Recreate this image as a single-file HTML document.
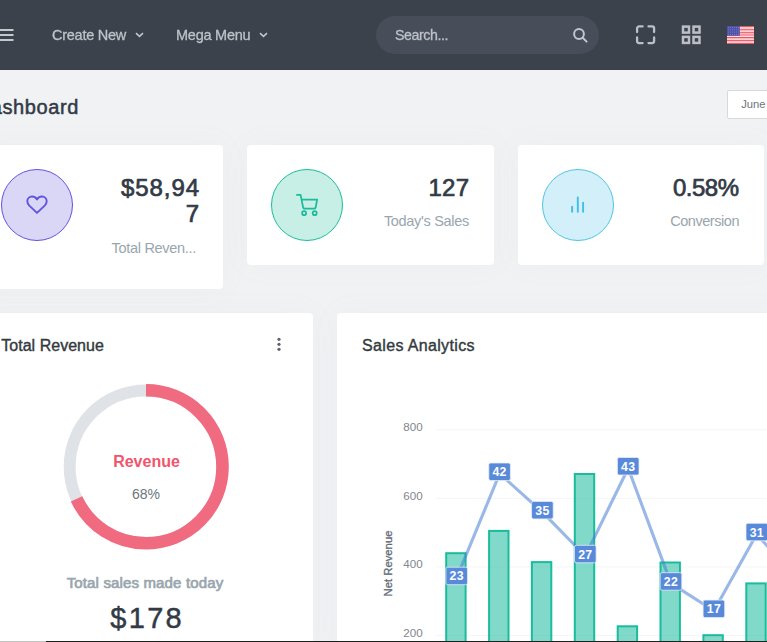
<!DOCTYPE html>
<html>
<head>
<meta charset="utf-8">
<title>Dashboard</title>
<style>
*{box-sizing:border-box;margin:0;padding:0}
html,body{width:767px;height:642px;overflow:hidden}
body{font-family:"Liberation Sans",sans-serif;background:#f1f2f4;position:relative;color:#323a46}
.abs{position:absolute}
#hdr{left:0;top:0;width:767px;height:70px;background:#3b424c}
.nav{will-change:transform;color:#bec2c9;-webkit-text-stroke:0.3px #bec2c9;font-size:14.5px;line-height:20px;white-space:nowrap;letter-spacing:-0.25px}
#search{left:376px;top:16px;width:223px;height:38px;border-radius:19px;background:#474e5a}
#search span{will-change:transform;position:absolute;left:19.4px;top:9px;font-size:14.2px;line-height:20px;color:#bdc1c8;-webkit-text-stroke:0.3px #bdc1c8;letter-spacing:-0.42px}
#title{font-size:20px;line-height:24px;font-weight:normal;-webkit-text-stroke:0.5px #323a46;color:#323a46;white-space:nowrap;letter-spacing:0.6px}
#june{left:727px;top:90px;width:60px;height:29px;background:#fff;border:1px solid #d6d9df;border-radius:2px;font-size:11.2px;line-height:26.6px;color:#6c757d;padding-left:13.2px}
.card{background:#fff;border-radius:4px;box-shadow:0 0 30px 0 rgba(154,161,171,.05)}
.circ{width:72px;height:72px;border-radius:50%;border:1px solid}
.big{font-size:24px;line-height:26px;font-weight:normal;-webkit-text-stroke:0.7px #323a46;color:#323a46;text-align:right;white-space:nowrap;letter-spacing:0.9px;margin-left:0.9px}
.sub{font-size:14.5px;line-height:20px;color:#98a6ad;text-align:right;white-space:nowrap;letter-spacing:-0.3px}
.h4{font-size:16px;line-height:20px;font-weight:normal;-webkit-text-stroke:0.4px #343a40;color:#343a40;white-space:nowrap;letter-spacing:0.1px}
</style>
</head>
<body>
<!-- header -->
<div id="hdr" class="abs"></div>
<svg class="abs" style="left:0;top:27px" width="16" height="16" viewBox="0 0 16 16"><g fill="#c5c8cd"><rect x="0" y="2" width="13.5" height="2"/><rect x="0" y="7" width="13.5" height="2"/><rect x="0" y="12" width="13.5" height="2"/></g></svg>
<div class="abs nav" style="left:52px;top:25px">Create New</div>
<svg class="abs" style="left:135px;top:31px" width="10" height="8" viewBox="0 0 10 8"><path d="M1 2.2 L4.5 5.4 L8 2.2" fill="none" stroke="#c0c3c9" stroke-width="1.6"/></svg>
<div class="abs nav" style="left:176px;top:25px">Mega Menu</div>
<svg class="abs" style="left:259px;top:31px" width="10" height="8" viewBox="0 0 10 8"><path d="M1 2.2 L4.5 5.4 L8 2.2" fill="none" stroke="#c0c3c9" stroke-width="1.6"/></svg>
<div id="search" class="abs"><span>Search...</span>
<svg class="abs" style="left:196px;top:11px" width="17" height="17" viewBox="0 0 17 17"><circle cx="7" cy="7" r="4.9" fill="none" stroke="#c2c5cb" stroke-width="2"/><line x1="10.7" y1="10.7" x2="14.6" y2="14.6" stroke="#c2c5cb" stroke-width="2" stroke-linecap="round"/></svg>
</div>
<!-- fullscreen icon -->
<svg class="abs" style="left:635px;top:24px" width="22" height="22" viewBox="0 0 22 22"><g fill="none" stroke="#bcbfc5" stroke-width="2.3" stroke-linecap="round" stroke-linejoin="round"><path d="M2.1 8 V4.4 a2 2 0 0 1 2 -2 H7.6"/><path d="M13.5 2.4 H17.1 a2 2 0 0 1 2 2 V8"/><path d="M19.1 13.5 V17.1 a2 2 0 0 1 -2 2 H13.5"/><path d="M7.6 19.1 H4.1 a2 2 0 0 1 -2 -2 V13.5"/></g></svg>
<!-- grid icon -->
<svg class="abs" style="left:681px;top:24px" width="22" height="22" viewBox="0 0 22 22"><g fill="none" stroke="#bcbfc5" stroke-width="2.5"><rect x="2" y="2.6" width="6" height="6"/><rect x="12.5" y="2.6" width="6" height="6"/><rect x="2" y="12.9" width="6" height="6"/><rect x="12.5" y="12.9" width="6" height="6"/></g></svg>
<!-- flag -->
<svg class="abs" style="left:727px;top:25.8px" width="27.1" height="18.2" viewBox="0 0 27.1 18.2"><rect width="27.1" height="18.2" fill="#f7cfd3"/><rect y="9.8" width="27.1" height="1.2" fill="#f9e4e6"/><rect y="0" width="27.1" height="1.0" fill="#f5525f"/><rect y="3.2" width="27.1" height="1.0" fill="#f5525f"/><rect y="6.2" width="27.1" height="1.0" fill="#f5525f"/><rect y="8.2" width="27.1" height="1.6" fill="#f28f97"/><rect y="11.0" width="27.1" height="1.2" fill="#f5525f"/><rect y="14.1" width="27.1" height="1.0" fill="#f5525f"/><rect y="17.0" width="27.1" height="1.2" fill="#f5525f"/><rect width="12.8" height="9.8" fill="#4c51a9"/><g fill="#fff" fill-opacity="0.33"><circle cx="1.4" cy="1.6" r="0.55"/><circle cx="3.4" cy="1.6" r="0.55"/><circle cx="5.4" cy="1.6" r="0.55"/><circle cx="7.4" cy="1.6" r="0.55"/><circle cx="9.4" cy="1.6" r="0.55"/><circle cx="11.4" cy="1.6" r="0.55"/><circle cx="1.4" cy="3.8" r="0.55"/><circle cx="3.4" cy="3.8" r="0.55"/><circle cx="5.4" cy="3.8" r="0.55"/><circle cx="7.4" cy="3.8" r="0.55"/><circle cx="9.4" cy="3.8" r="0.55"/><circle cx="11.4" cy="3.8" r="0.55"/><circle cx="1.4" cy="6.0" r="0.55"/><circle cx="3.4" cy="6.0" r="0.55"/><circle cx="5.4" cy="6.0" r="0.55"/><circle cx="7.4" cy="6.0" r="0.55"/><circle cx="9.4" cy="6.0" r="0.55"/><circle cx="11.4" cy="6.0" r="0.55"/><circle cx="1.4" cy="8.2" r="0.55"/><circle cx="3.4" cy="8.2" r="0.55"/><circle cx="5.4" cy="8.2" r="0.55"/><circle cx="7.4" cy="8.2" r="0.55"/><circle cx="9.4" cy="8.2" r="0.55"/><circle cx="11.4" cy="8.2" r="0.55"/></g></svg>

<!-- title -->
<div id="title" class="abs" style="left:-24.3px;top:95px">Dashboard</div>
<div id="june" class="abs">June</div>

<!-- stat cards -->
<div class="abs card" style="left:-24px;top:145px;width:247px;height:144px"></div>
<div class="abs circ" style="left:1px;top:169px;background:#dad7f6;border-color:#6153df"></div>
<svg class="abs" style="left:25px;top:194px" width="24" height="22" viewBox="0 0 24 22"><path d="M12 18.9 L4.3 11.6 C 3 10.3 2.3 8.9 2.3 7.3 C 2.3 4.5 4.5 2.5 7 2.5 C 9 2.5 10.8 3.6 12 5.4 C 13.2 3.6 15 2.5 17 2.5 C 19.5 2.5 21.7 4.5 21.7 7.3 C 21.7 8.9 21 10.3 19.7 11.6 Z" fill="none" stroke="#6254de" stroke-width="1.9" stroke-linejoin="round"/></svg>
<div class="abs big" style="left:99px;top:175px;width:100px">$58,94<br>7</div>
<div class="abs sub" style="left:79px;top:238px;width:117px">Total Reven...</div>

<div class="abs card" style="left:247px;top:145px;width:247px;height:120px"></div>
<div class="abs circ" style="left:271px;top:169px;background:#c8efe6;border-color:#1abc9c"></div>
<svg class="abs" style="left:295.8px;top:193.6px" width="22.1" height="22.1" viewBox="0 0 24 24"><g fill="none" stroke="#1abc9c" stroke-width="1.9" stroke-linejoin="round" stroke-linecap="round"><path d="M1 1h4l2.68 13.39a2 2 0 0 0 2 1.61h9.72a2 2 0 0 0 2-1.61L23 6H6"/><circle cx="8.8" cy="20.8" r="2.15"/><circle cx="20.3" cy="20.8" r="2.15"/></g></svg>
<div class="abs big" style="left:369px;top:175px;width:100px;letter-spacing:0.2px;margin-left:0.2px">127</div>
<div class="abs sub" style="left:349px;top:211px;width:120px">Today's Sales</div>

<div class="abs card" style="left:518px;top:145px;width:246px;height:120px"></div>
<div class="abs circ" style="left:542px;top:169px;background:#d3eff9;border-color:#4fc6e1"></div>
<svg class="abs" style="left:568px;top:194px" width="20" height="20" viewBox="0 0 20 20"><g stroke="#41bee6" stroke-width="1.9" stroke-linecap="round"><line x1="4.1" y1="12.8" x2="4.1" y2="17.8"/><line x1="9.8" y1="3.4" x2="9.8" y2="17.8"/><line x1="15.1" y1="8.8" x2="15.1" y2="17.8"/></g></svg>
<div class="abs big" style="left:639px;top:175px;width:100px;letter-spacing:-0.5px;margin-left:-0.5px">0.58%</div>
<div class="abs sub" style="left:619px;top:211px;width:120px;letter-spacing:-0.45px">Conversion</div>

<!-- total revenue card -->
<div class="abs card" style="left:-24px;top:313px;width:337px;height:340px"></div>
<div class="abs h4" style="left:1.3px;top:336px;letter-spacing:0.02px">Total Revenue</div>
<svg class="abs" style="left:276.4px;top:337px" width="6" height="15" viewBox="0 0 6 15"><g fill="#5f6470"><circle cx="3" cy="2.3" r="1.6"/><circle cx="3" cy="7.3" r="1.6"/><circle cx="3" cy="12.3" r="1.6"/></g></svg>
<svg class="abs" style="left:56px;top:376px" width="180" height="180" viewBox="0 0 180 180">
<circle cx="90" cy="90.8" r="76.3" fill="none" stroke="#dfe2e7" stroke-width="12"/>
<circle cx="90" cy="90.8" r="76.5" fill="none" stroke="#f06b80" stroke-width="12.6" stroke-dasharray="326.8 1000" transform="rotate(-90 90 90.8)"/>
</svg>
<div class="abs" style="left:66.5px;top:452px;width:160px;text-align:center;font-size:16px;line-height:20px;font-weight:bold;color:#f1556c">Revenue</div>
<div class="abs" style="left:66px;top:484px;width:160px;text-align:center;font-size:14px;line-height:20px;color:#6c757d">68%</div>
<div class="abs" style="left:45px;top:573px;width:200px;text-align:center;font-size:15px;line-height:20px;-webkit-text-stroke:0.7px #98a6ad;color:#98a6ad;white-space:nowrap;letter-spacing:0.15px">Total sales made today</div>
<div class="abs" style="left:47.2px;top:600px;width:200px;text-align:center;font-size:29px;line-height:36px;color:#323a46;letter-spacing:2.3px;-webkit-text-stroke:0.45px #323a46">$178</div>

<!-- sales analytics card -->
<div class="abs card" style="left:337px;top:313px;width:460px;height:340px"></div>
<div class="abs h4" style="left:362px;top:336px;letter-spacing:0.35px">Sales Analytics</div>
<svg id="chart" class="abs" style="left:337px;top:400px" width="430" height="242" viewBox="337 400 430 242">
<line x1="436" y1="429.8" x2="767" y2="429.8" stroke="#f3f5f8" stroke-width="1"/>
<text x="422.7" y="431.1" text-anchor="end" font-size="11.6" fill="#82868e">800</text>
<line x1="436" y1="498.4" x2="767" y2="498.4" stroke="#f3f5f8" stroke-width="1"/>
<text x="422.7" y="499.7" text-anchor="end" font-size="11.6" fill="#82868e">600</text>
<line x1="436" y1="566.9" x2="767" y2="566.9" stroke="#f3f5f8" stroke-width="1"/>
<text x="422.7" y="568.2" text-anchor="end" font-size="11.6" fill="#82868e">400</text>
<line x1="436" y1="635.5" x2="767" y2="635.5" stroke="#f3f5f8" stroke-width="1"/>
<text x="422.7" y="636.8" text-anchor="end" font-size="11.6" fill="#82868e">200</text>
<text transform="translate(391.500 563.500) rotate(-90)" text-anchor="middle" font-size="11.3" letter-spacing="0" stroke="#636b78" stroke-width="0.3" fill="#636b78">Net Revenue</text>
<rect x="446.2" y="553.2" width="19.4" height="146.8" fill="#1abc9c" fill-opacity="0.55" stroke="#1abc9c" stroke-width="2"/>
<rect x="489.1" y="530.9" width="19.4" height="169.1" fill="#1abc9c" fill-opacity="0.55" stroke="#1abc9c" stroke-width="2"/>
<rect x="531.9" y="562.1" width="19.4" height="137.9" fill="#1abc9c" fill-opacity="0.55" stroke="#1abc9c" stroke-width="2"/>
<rect x="574.8" y="474.0" width="19.4" height="226.0" fill="#1abc9c" fill-opacity="0.55" stroke="#1abc9c" stroke-width="2"/>
<rect x="617.7" y="626.3" width="19.4" height="73.7" fill="#1abc9c" fill-opacity="0.55" stroke="#1abc9c" stroke-width="2"/>
<rect x="660.5" y="562.5" width="19.4" height="137.5" fill="#1abc9c" fill-opacity="0.55" stroke="#1abc9c" stroke-width="2"/>
<rect x="703.4" y="635.2" width="19.4" height="64.8" fill="#1abc9c" fill-opacity="0.55" stroke="#1abc9c" stroke-width="2"/>
<rect x="746.3" y="583.4" width="19.4" height="116.6" fill="#1abc9c" fill-opacity="0.55" stroke="#1abc9c" stroke-width="2"/>
<rect x="789.2" y="446.3" width="19.4" height="253.7" fill="#1abc9c" fill-opacity="0.55" stroke="#1abc9c" stroke-width="2"/>
<polyline points="456.7,577.9 499.6,473.7 542.4,512.1 585.3,556.0 628.2,468.2 671.0,583.4 713.9,610.8 756.8,534.0 799.7,583.4" fill="none" stroke="#4a81d4" stroke-opacity="0.56" stroke-width="3.1" stroke-linejoin="round" stroke-linecap="round"/>
<rect x="445.9" y="567.2" width="21.6" height="17.5" rx="1.8" fill="#588ad9" stroke="#e4ecf8" stroke-width="0.8"/>
<text x="456.7" y="580.4" text-anchor="middle" font-size="12.3" letter-spacing="0.3" font-weight="bold" fill="#fff">23</text>
<rect x="488.8" y="463.0" width="21.6" height="17.5" rx="1.8" fill="#588ad9" stroke="#e4ecf8" stroke-width="0.8"/>
<text x="499.6" y="476.2" text-anchor="middle" font-size="12.3" letter-spacing="0.3" font-weight="bold" fill="#fff">42</text>
<rect x="531.6" y="501.4" width="21.6" height="17.5" rx="1.8" fill="#588ad9" stroke="#e4ecf8" stroke-width="0.8"/>
<text x="542.4" y="514.6" text-anchor="middle" font-size="12.3" letter-spacing="0.3" font-weight="bold" fill="#fff">35</text>
<rect x="574.5" y="545.3" width="21.6" height="17.5" rx="1.8" fill="#588ad9" stroke="#e4ecf8" stroke-width="0.8"/>
<text x="585.3" y="558.5" text-anchor="middle" font-size="12.3" letter-spacing="0.3" font-weight="bold" fill="#fff">27</text>
<rect x="617.4" y="457.5" width="21.6" height="17.5" rx="1.8" fill="#588ad9" stroke="#e4ecf8" stroke-width="0.8"/>
<text x="628.2" y="470.7" text-anchor="middle" font-size="12.3" letter-spacing="0.3" font-weight="bold" fill="#fff">43</text>
<rect x="660.2" y="572.7" width="21.6" height="17.5" rx="1.8" fill="#588ad9" stroke="#e4ecf8" stroke-width="0.8"/>
<text x="671.0" y="585.9" text-anchor="middle" font-size="12.3" letter-spacing="0.3" font-weight="bold" fill="#fff">22</text>
<rect x="703.1" y="600.1" width="21.6" height="17.5" rx="1.8" fill="#588ad9" stroke="#e4ecf8" stroke-width="0.8"/>
<text x="713.9" y="613.3" text-anchor="middle" font-size="12.3" letter-spacing="0.3" font-weight="bold" fill="#fff">17</text>
<rect x="746.0" y="523.3" width="21.6" height="17.5" rx="1.8" fill="#588ad9" stroke="#e4ecf8" stroke-width="0.8"/>
<text x="756.8" y="536.5" text-anchor="middle" font-size="12.3" letter-spacing="0.3" font-weight="bold" fill="#fff">31</text>
<rect x="788.9" y="572.7" width="21.6" height="17.5" rx="1.8" fill="#588ad9" stroke="#e4ecf8" stroke-width="0.8"/>
<text x="799.7" y="585.9" text-anchor="middle" font-size="12.3" letter-spacing="0.3" font-weight="bold" fill="#fff">22</text>
</svg>

<!-- bottom line -->
<div class="abs" style="left:0;top:641px;width:46px;height:1px;background:#c2c2c2"></div>
<div class="abs" style="left:46px;top:641px;width:721px;height:1px;background:#1e1e1e"></div>
</body>
</html>
